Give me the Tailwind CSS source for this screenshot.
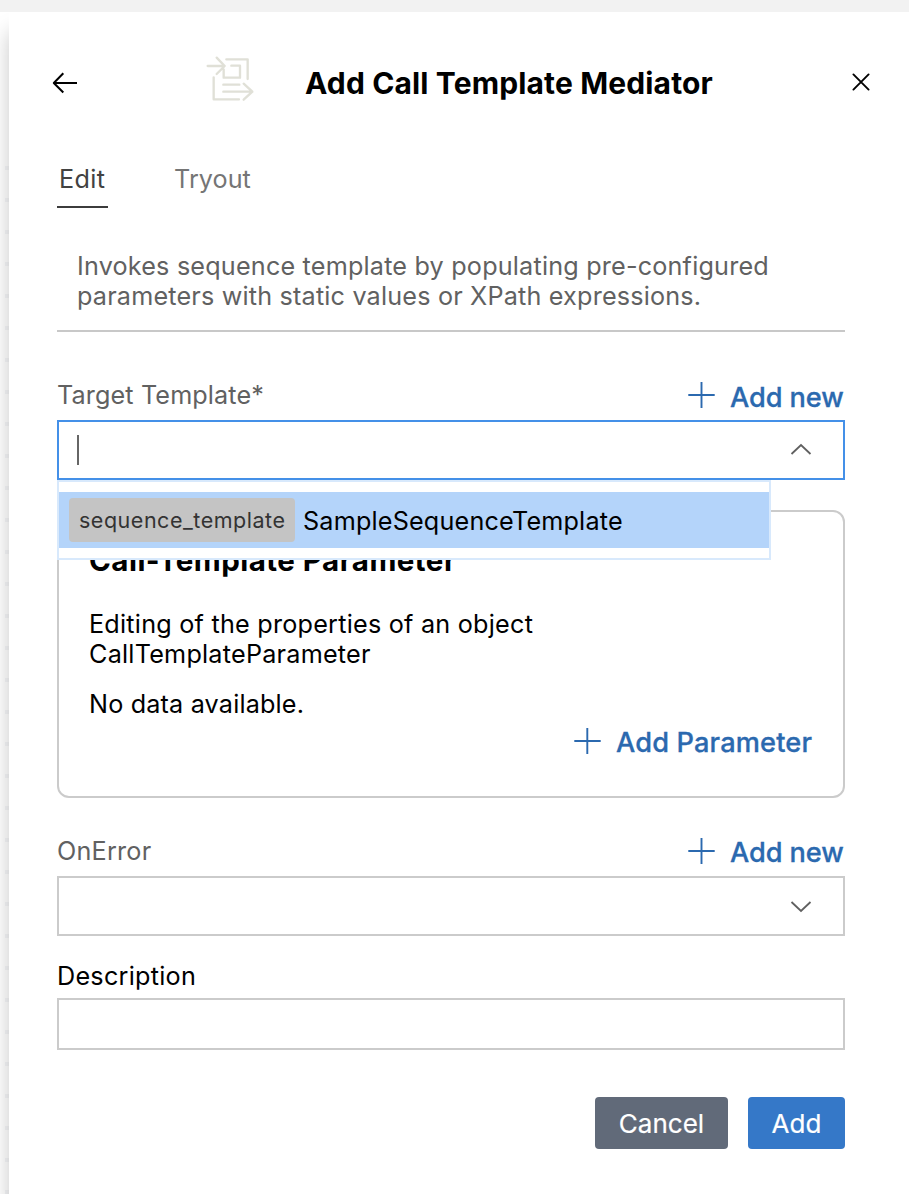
<!DOCTYPE html>
<html lang="en">
<head>
<meta charset="utf-8">
<title>Add Call Template Mediator</title>
<script src="https://cdn.jsdelivr.net/npm/@tailwindcss/browser@4"></script>
</head>
<body class="h-[1194px] w-[909px] overflow-hidden bg-white font-['Inter',sans-serif] text-[25.2px] leading-[30px] text-black">
<div class="h-3 bg-[#f2f2f2]"></div>
<div class="flex h-[1182px] overflow-hidden">
  <!-- canvas grid behind the panel -->
  <div class="w-[9px] shrink-0 pt-[154px] pl-[5px]">
    <div class="h-full w-1 bg-[repeating-linear-gradient(to_bottom,#f5f6f8_0px,#f5f6f8_4px,transparent_4px,transparent_32px)]"></div>
  </div>
  <main class="w-[900px] shrink-0 bg-white pr-16 pl-12 shadow-[0_20px_20px_rgba(0,0,0,0.22)]">
    <header class="-mr-[26px] -ml-[5px] flex h-[140px] items-start">
      <svg class="mt-[58px] h-6 w-[26px] shrink-0" viewBox="0 0 26 24" fill="none" stroke="#000" stroke-width="2" stroke-linejoin="round"><path d="M25 13H2M11.3 3.3L1.8 13l9.5 9.5"/></svg>
      <svg class="mt-[38px] ml-[122px] h-[60px] w-[60px] shrink-0" viewBox="0 0 180 180" fill="none" stroke="#e0e0d7" stroke-width="7" stroke-linecap="round" stroke-linejoin="round"><path d="M23 48H74M50 23L74 48L50 72M79 28H143V87M94 47H120V83H71V58M41 82V148H117M70 104H118M70 125H157M131 101L157 125L131 149"/></svg>
      <h1 class="mt-[51px] ml-[45px] text-[30px] leading-10 font-bold tracking-[0.14px] whitespace-nowrap">Add Call Template Mediator</h1>
      <svg class="mt-[60px] mr-0 ml-auto h-5 w-5 shrink-0" viewBox="0 0 20 20" fill="none" stroke="#000" stroke-width="1.9" stroke-linecap="round"><path d="M2.4 2.4l15.2 15.2M17.6 2.4L2.4 17.6"/></svg>
    </header>
    <nav class="mt-3 flex h-11">
      <div class="w-[51px] border-b-2 border-[#3c3c3c] pl-0.5 tracking-[0.4px] text-[#424242]">Edit</div>
      <div class="ml-[66px] tracking-[0.05px] text-[#757575]">Tryout</div>
    </nav>
    <p class="mt-[43px] h-[81px] border-b-2 border-[#c8c8c8] pl-5 whitespace-nowrap text-[#616161]"><span class="tracking-[0.19px]">Invokes sequence template by populating pre-configured</span><br><span class="tracking-[0.18px]">parameters with static values or XPath expressions.</span></p>

    <section class="relative mt-12">
      <div class="flex h-10 justify-between">
        <label class="tracking-[0.12px] text-[#616161]">Target Template*</label>
        <div class="mt-0.5 flex text-[27.2px] font-medium text-[#2b69af]">
          <svg class="mr-[15px] h-[27px] w-[27px]" viewBox="0 0 27 27" stroke="currentColor" stroke-width="1.9"><path d="M.3 13H26.7M13.5 0V26"/></svg>
          <span class="w-[115px] pt-px tracking-[-0.1px] whitespace-nowrap [-webkit-text-stroke:0.3px_#2b69af]">Add new</span>
        </div>
      </div>
      <div class="flex h-[60px] items-center justify-between border-2 border-[#4490e8] pr-[31px] pl-[18px]">
        <div class="h-[30px] w-0.5 bg-[#666]"></div>
        <svg class="h-5 w-[22px]" viewBox="0 0 22 20" fill="none" stroke="#606060" stroke-width="1.8"><path d="M1.5 14L11 5l9.5 9"/></svg>
      </div>
      <!-- suggestion menu -->
      <div class="absolute top-[100px] left-0 z-10 h-20 w-[714px] border-2 border-[#d8e9fc] bg-white py-2.5">
        <div class="flex h-14 items-center bg-[#b4d4fa] pl-2.5">
          <span class="h-11 w-[226px] rounded bg-[#c4c4c4] pl-2.5 text-[21.5px] leading-11 tracking-[0.52px] text-[#333]">sequence_template</span>
          <span class="ml-2 h-11 leading-[46px] tracking-[0.18px]">SampleSequenceTemplate</span>
        </div>
      </div>
    </section>

    <section class="mt-[30px] h-72 rounded-xl border-2 border-[#cbcbcb] p-[30px]">
      <h2 class="text-[29.5px] leading-9 font-bold tracking-[0.48px]">Call-Template Parameter</h2>
      <p class="mt-[31px] whitespace-nowrap tracking-[0.23px]">Editing of the properties of an object<br>CallTemplateParameter</p>
      <p class="mt-5 tracking-[0.17px]">No data available.</p>
      <div class="mt-2 flex justify-end text-[27.2px] font-medium text-[#2b69af]">
        <svg class="mr-[15px] h-[27px] w-[27px]" viewBox="0 0 27 27" stroke="currentColor" stroke-width="1.9"><path d="M.3 14H26.7M13.3 1V27"/></svg>
        <span class="w-[197px] pt-px tracking-[0.15px] whitespace-nowrap [-webkit-text-stroke:0.3px_#2b69af]">Add Parameter</span>
      </div>
    </section>

    <section class="mt-[38px]">
      <div class="flex h-10 justify-between">
        <label class="tracking-[0.23px] text-[#616161]">OnError</label>
        <div class="mt-px flex text-[27.2px] font-medium text-[#2b69af]">
          <svg class="mr-[15px] h-[27px] w-[27px]" viewBox="0 0 27 27" stroke="currentColor" stroke-width="1.9"><path d="M.3 14H26.7M13.5 1V27"/></svg>
          <span class="w-[115px] pt-px tracking-[-0.1px] whitespace-nowrap [-webkit-text-stroke:0.3px_#2b69af]">Add new</span>
        </div>
      </div>
      <div class="flex h-[60px] items-center justify-end border-2 border-[#cbcbcb] pr-[31px]">
        <svg class="h-5 w-[22px]" viewBox="0 0 22 20" fill="none" stroke="#606060" stroke-width="1.8"><path d="M1.5 6L11 15l9.5-9"/></svg>
      </div>
    </section>

    <section class="mt-[25px]">
      <label class="block h-[37px] tracking-[0.25px]">Description</label>
      <div class="h-[52px] border-2 border-[#cbcbcb]"></div>
    </section>

    <footer class="mt-[47px] flex justify-end gap-5 text-[26px] leading-[53px] text-white">
      <button class="h-[52px] w-[133px] rounded bg-[#616a79] [-webkit-text-stroke:0.2px_#fff]">Cancel</button>
      <button class="h-[52px] w-[97px] rounded bg-[#3578c8] [-webkit-text-stroke:0.2px_#fff]">Add</button>
    </footer>
  </main>
</div>
</body>
</html>
